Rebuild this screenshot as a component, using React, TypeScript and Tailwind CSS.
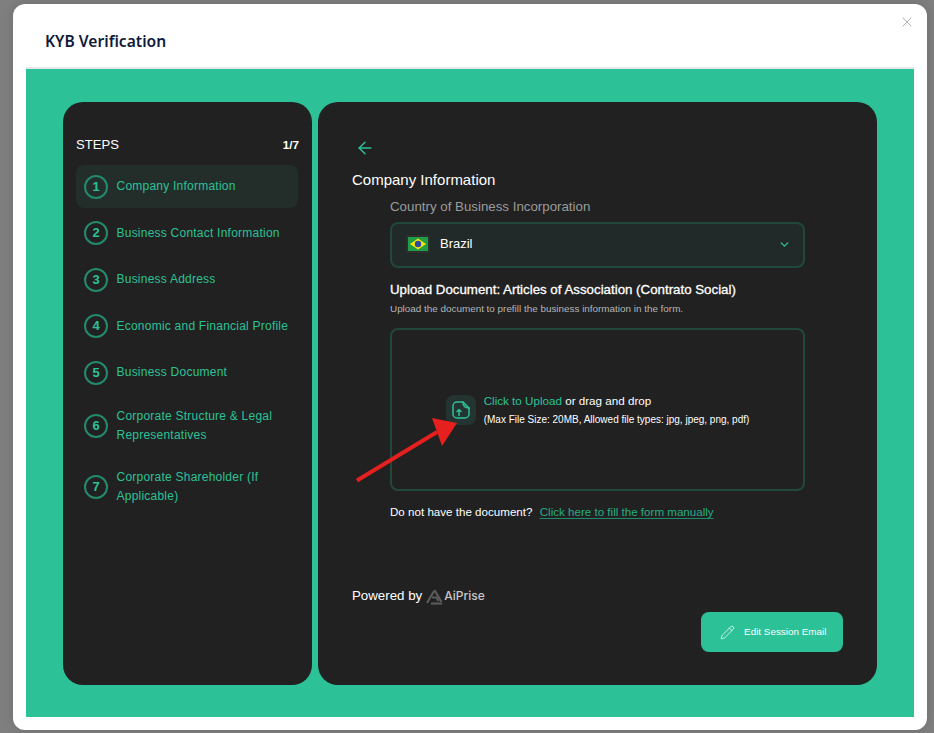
import React from 'react'
import { ArrowLeft, ChevronDown, Pencil, X } from 'lucide-react'

const steps = [
  { n: 1, label: 'Company Information', active: true },
  { n: 2, label: 'Business Contact Information' },
  { n: 3, label: 'Business Address' },
  { n: 4, label: 'Economic and Financial Profile' },
  { n: 5, label: 'Business Document' },
  { n: 6, label: 'Corporate Structure & Legal Representatives' },
  { n: 7, label: 'Corporate Shareholder (If Applicable)' },
]

function BrazilFlag(): React.JSX.Element {
  return (
    <svg width="24" height="18" viewBox="0 0 24 18" className="shrink-0">
      <rect width="24" height="18" fill="#2b2f2d" />
      <rect x="2" y="2" width="20" height="14" fill="#229e45" />
      <path d="M12 3.500 20 9l-8 5.500L4 9Z" fill="#f8e509" />
      <circle cx="12" cy="9" r="3.200" fill="#2b49a3" />
    </svg>
  )
}

function UploadIcon(): React.JSX.Element {
  return (
    <svg width="18" height="18" viewBox="0 0 18 18" fill="none" stroke="#2cc197" strokeWidth="1.500" strokeLinecap="round" strokeLinejoin="round">
      <path d="M11 1H5a4 4 0 0 0-4 4v8a4 4 0 0 0 4 4h8a4 4 0 0 0 4-4V7Z" />
      <path d="M11 1c0 3.500 2 6 6 6" />
      <path d="M5 10.500 7 8.500 9 10.500M7 8.500v6" />
    </svg>
  )
}

function AiPriseLogo(): React.JSX.Element {
  return (
    <svg width="17" height="17" viewBox="0 0 17 17" fill="none" stroke="#5a5a5a" strokeWidth="2.200">
      <path d="M1 15 8 3" />
      <path d="M8.500 2l7 12" />
      <path d="M5 15.500h11" />
      <path d="M6 9.500h4.500l2 3.500" />
    </svg>
  )
}

function StepRow({ n, label, active }: { n: number; label: string; active?: boolean }): React.JSX.Element {
  return (
    <div className={`flex items-center gap-[8.500px] rounded-lg pl-[8px] pr-2 py-[9.500px] ${active ? 'bg-[#232e2b]' : ''}`}>
      <div className="flex h-[24px] w-[24px] shrink-0 items-center justify-center rounded-full border-2 border-[#238a6d] text-[13px] font-bold text-[#2cc197]">
        {n}
      </div>
      <span className="text-[12px] leading-[19px] tracking-[0.23px] text-[#2cc197]">{label}</span>
    </div>
  )
}

export default function App(): React.JSX.Element {
  return (
    <div className="h-[733px] w-[934px] overflow-hidden bg-[#7f7f7f] pl-[13px] pr-[7px] pt-[4px] font-['Liberation_Sans',Arial,sans-serif]">
      <div className="relative h-[726px] w-[914px] rounded-[12px] bg-white shadow-[0_0_12px_rgba(0,0,0,0.15)]">
        <div className="flex h-[63px] items-center pl-[32px] pr-[13px] pt-[12px]">
          <h2 className="font-['Noto_Sans',sans-serif] text-[15.600px] font-semibold text-[#101b3b]">KYB Verification</h2>
        </div>
        <button className="absolute right-[12px] top-[10px] text-[#9a9ea6]">
          <X size={16} strokeWidth={1.200} />
        </button>
        <div className="mx-[13px] flex h-[650px] gap-[6px] border-t-2 border-[#e5e7eb] bg-[#2cc197] pb-[32px] pl-[37px] pr-[37px] pt-[33px]">
          <aside className="w-[249px] shrink-0 rounded-[20px] bg-[#212121] px-[13px] pt-[34px]">
            <div className="mb-[12px] flex items-center justify-between text-white">
              <span className="text-[13.100px] leading-[17px]">STEPS</span>
              <span className="text-[11.700px] font-bold leading-[17px]">1/7</span>
            </div>
            <div className="mr-[1px] flex flex-col gap-[3.500px]">
              {steps.map((s) => (
                <StepRow key={s.n} n={s.n} label={s.label} active={s.active} />
              ))}
            </div>
          </aside>

          <main className="relative flex-1 rounded-[20px] bg-[#212121] pl-[34px] pr-[72px] pt-[36px]">
            <ArrowLeft size={20} strokeWidth={1.700} className="ml-[2.500px] text-[#2cc197]" />
            <h3 className="mt-[12px] text-[15px] leading-[20px] text-white">Company Information</h3>
            <div className="ml-[38px] mt-[8px]">
              <label className="block text-[13.300px] leading-[18px] text-[#9b9b9b]">Country of Business Incorporation</label>
              <div className="mt-[6px] flex h-[46px] items-center rounded-lg border-2 border-[#20483d] bg-[#212a28] pb-[2px] pl-[14px] pr-[12px]">
                <BrazilFlag />
                <span className="ml-[10px] text-[13px] text-white">Brazil</span>
                <ChevronDown size={13} strokeWidth={2.500} className="ml-auto text-[#2cc197]" />
              </div>
              <p className="mt-[13px] text-[13.300px] font-medium leading-[18px] text-white [-webkit-text-stroke:0.3px_white]">
                Upload Document: Articles of Association (Contrato Social)
              </p>
              <p className="mt-[3px] text-[9.900px] leading-[14px] text-[#b5b5b5]">
                Upload the document to prefill the business information in the form.
              </p>
              <div className="mt-[12px] flex h-[163px] items-center justify-center gap-[8px] rounded-lg border-2 border-[#20483d]">
                <div className="flex h-[30px] w-[30px] items-center justify-center rounded-lg bg-[#243430]">
                  <UploadIcon />
                </div>
                <div>
                  <p className="text-[11.650px] leading-[16px] text-white">
                    <span className="text-[#2cc197]">Click to Upload</span> or drag and drop
                  </p>
                  <p className="mt-[4.500px] text-[10px] leading-[13px] text-white">
                    (Max File Size: 20MB, Allowed file types: jpg, jpeg, png, pdf)
                  </p>
                </div>
              </div>
              <p className="mt-[12px] text-[11.600px] leading-[18px] text-white">
                Do not have the document?{' '}
                <a className="ml-[4px] text-[#25ad85] underline decoration-[#1f8a6c] underline-offset-[1.500px]">Click here to fill the form manually</a>
              </p>
            </div>
            <div className="mt-[66px] flex items-center text-[13.300px] leading-[18px] text-white">
              Powered by
              <span className="ml-[4px] flex items-center gap-[1px] font-['Inter',sans-serif] text-[12px] font-medium text-[#c8c8c8]">
                <AiPriseLogo />
                AiPrise
              </span>
            </div>
            <button className="absolute bottom-[33px] right-[34px] flex h-[40px] w-[142.500px] items-center justify-center gap-[9px] rounded-lg bg-[#2cc197] pl-[3px] text-[9.900px] text-white">
              <Pencil size={15} strokeWidth={1.200} />
              Edit Session Email
            </button>
          </main>
        </div>

        {/* arrow drawn over the upload box in the screenshot */}
        <svg className="absolute left-[337px] top-[410px]" width="110" height="80" viewBox="0 0 110 80">
          <path d="M7 66.500 L87 18" stroke="#e61f1f" strokeWidth="4" />
          <path d="M107 9 L82 4 L92 32 Z" fill="#e61f1f" />
        </svg>
      </div>
    </div>
  )
}
